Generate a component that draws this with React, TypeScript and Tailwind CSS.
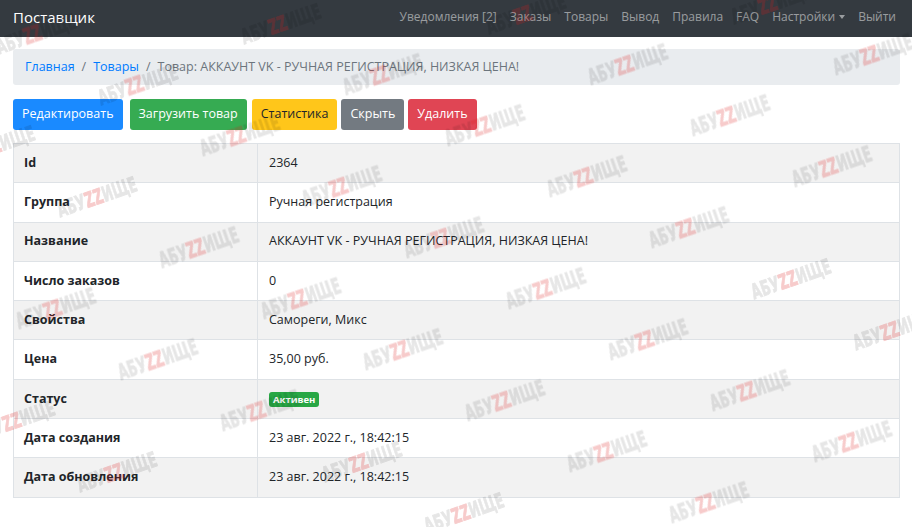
import React from 'react';

const navLinks = ['Уведомления [2]', 'Заказы', 'Товары', 'Вывод', 'Правила', 'FAQ'];

const rows: { label: string; value: React.ReactNode }[] = [
  { label: 'Id', value: '2364' },
  { label: 'Группа', value: 'Ручная регистрация' },
  { label: 'Название', value: 'АККАУНТ VK - РУЧНАЯ РЕГИСТРАЦИЯ, НИЗКАЯ ЦЕНА!' },
  { label: 'Число заказов', value: '0' },
  { label: 'Свойства', value: 'Самореги, Микс' },
  { label: 'Цена', value: '35,00 руб.' },
  {
    label: 'Статус',
    value: (
      <span className="inline-flex h-[15px] items-center rounded-[3px] bg-[#28a745] px-[4px] text-[9.5px] font-bold text-white">
        Активен
      </span>
    ),
  },
  { label: 'Дата создания', value: '23 авг. 2022 г., 18:42:15' },
  { label: 'Дата обновления', value: '23 авг. 2022 г., 18:42:15' },
];

const buttons = [
  { text: 'Редактировать', cls: 'bg-[#1a8aff] text-white mr-[3px]' },
  { text: 'Загрузить товар', cls: 'bg-[#36ab52] text-white mr-[1px]' },
  { text: 'Статистика', cls: 'bg-[#ffc61a] text-[#212529]' },
  { text: 'Скрыть', cls: 'bg-[#737a81] text-white' },
  { text: 'Удалить', cls: 'bg-[#e04554] text-white' },
];

// watermark lattice, measured off the screenshot
function watermarkSpots() {
  const spots: { x: number; y: number }[] = [];
  for (let i = -4; i <= 6; i++) {
    for (let j = -4; j <= 14; j++) {
      const x = 138 + 245 * i + 102 * j;
      const y = 85 - 10 * i + 51 * j;
      if (x > -20 && x < 930 && y > 0 && y < 520) spots.push({ x, y });
    }
  }
  return spots;
}

// one pass per colour: the grey letters, then the red "ZZ" in the same layout
const WatermarkLayer: React.FC<{ red?: boolean }> = ({ red }) => {
  const grey = red ? 'none' : '#000';
  const zz = red ? '#dc1e1e' : 'none';
  return (
    <g opacity={red ? 0.23 : 0.1} fontFamily="'DejaVu Sans', sans-serif" fontWeight="bold" fontSize="21" strokeWidth="0.9">
      {watermarkSpots().map(s => (
        <text
          key={`${s.x}-${s.y}`}
          transform={`translate(${s.x} ${s.y}) rotate(-19) scale(0.6 1)`}
          textAnchor="middle"
          dominantBaseline="central"
        >
          <tspan fill={grey} stroke={grey}>АБУ</tspan>
          <tspan fill={zz} stroke={zz}>ZZ</tspan>
          <tspan fill={grey} stroke={grey}>ИЩЕ</tspan>
        </text>
      ))}
    </g>
  );
};

const Watermark: React.FC = () => (
  <svg className="pointer-events-none absolute left-0 top-0 z-10" width="912" height="527" viewBox="0 0 912 527">
    <WatermarkLayer />
    <WatermarkLayer red />
  </svg>
);

export default function App() {
  return (
    <div className="relative min-h-[527px] overflow-hidden bg-white text-[12.5px] text-[#212529] [font-family:'Open_Sans',sans-serif]">
      <nav className="flex h-[37px] items-center bg-[#343a40] pb-[3px] pl-[13px] pr-[16px]">
        <span className="text-[15px] text-white">Поставщик</span>
        <div className="ml-auto flex items-center text-[12px] text-white/50">
          {navLinks.map(l => (
            <a key={l} className="px-[6.5px]">{l}</a>
          ))}
          <a className="flex items-center px-[6.5px]">
            Настройки
            <span className="ml-[4px] inline-block border-x-[3.5px] border-t-[4px] border-b-0 border-x-transparent" />
          </a>
          <a className="pl-[6.5px]">Выйти</a>
        </div>
      </nav>

      <main className="pl-[13px] pr-[12px] pt-[12px]">
        <div className="flex h-[36px] items-center rounded-[3px] bg-[#e9ecef] px-[12px]">
          <a className="text-[#007bff]">Главная</a>
          <span className="px-[7px] text-[#6c757d]">/</span>
          <a className="text-[#007bff]">Товары</a>
          <span className="px-[7px] text-[#6c757d]">/</span>
          <span className="text-[#6c757d]">Товар: АККАУНТ VK - РУЧНАЯ РЕГИСТРАЦИЯ, НИЗКАЯ ЦЕНА!</span>
        </div>

        <div className="mt-[14px] flex gap-[4px]">
          {buttons.map(b => (
            <button key={b.text} className={`h-[31px] rounded-[3px] px-[9px] ${b.cls}`}>
              {b.text}
            </button>
          ))}
        </div>

        <table className="mt-[13px] w-full border-collapse border border-[#dee2e6]">
          <tbody>
            {rows.map((r, i) => (
              <tr key={r.label} className={i % 2 === 0 ? 'bg-[#f2f2f2]' : ''}>
                <td className="h-[39.3px] w-[244px] border border-[#dee2e6] px-[10px] py-0 font-bold">{r.label}</td>
                <td className="h-[39.3px] border border-[#dee2e6] px-[11px] py-0">{r.value}</td>
              </tr>
            ))}
          </tbody>
        </table>
      </main>

      <Watermark />
    </div>
  );
}
